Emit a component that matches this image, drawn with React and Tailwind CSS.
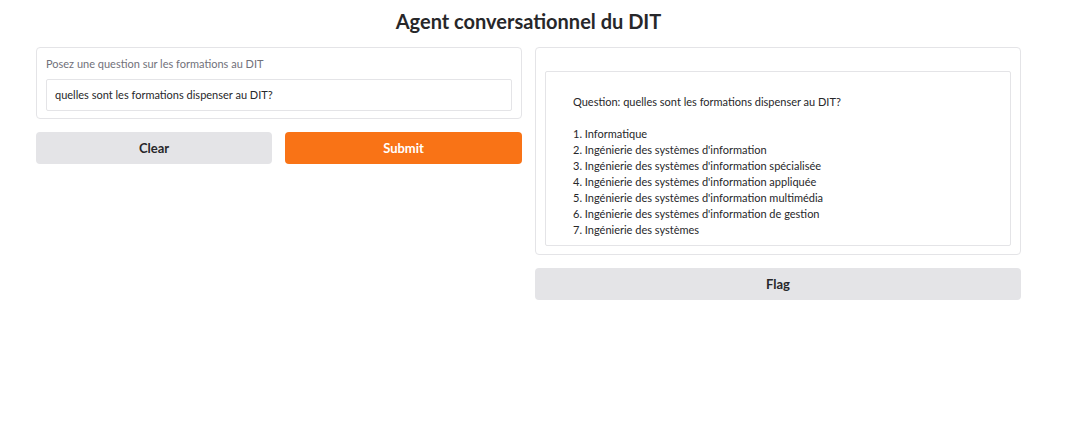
import React from 'react';

const formations = [
  'Informatique',
  "Ingénierie des systèmes d'information",
  "Ingénierie des systèmes d'information spécialisée",
  "Ingénierie des systèmes d'information appliquée",
  "Ingénierie des systèmes d'information multimédia",
  "Ingénierie des systèmes d'information de gestion",
  'Ingénierie des systèmes',
];

export default function App() {
  return (
    <div className="w-[1080px] h-[440px] bg-white text-[#27272a] font-['Lato',sans-serif]">
      <div className="w-[985px] ml-[36px]">
        <h1 className="h-[42px] pt-[7px] text-center text-[20px] font-bold text-[#27272a] leading-[28px]">
          Agent conversationnel du DIT
        </h1>

        <div className="mt-[5px] flex gap-[13px] items-start">
          {/* Input column */}
          <div className="w-[486px] flex flex-col gap-[13px]">
            <div className="h-[72px] border border-[#e4e4e7] rounded-[4px] px-[9px] pt-[9px]">
              <div className="text-[11px] leading-[14px] text-[#71717a]">
                Posez une question sur les formations au DIT
              </div>
              <div className="mt-[8px] h-[32px] border border-[#e4e4e7] rounded-[2px] px-[8px] flex items-center text-[11px] text-[#27272a]">
                quelles sont les formations dispenser au DIT?
              </div>
            </div>
            <div className="flex gap-[13px]">
              <button className="w-[236px] h-[32px] pt-[1px] rounded-[4px] bg-[#e4e4e7] text-[13px] font-bold text-[#27272a]">
                Clear
              </button>
              <button className="flex-1 h-[32px] pt-[1px] rounded-[4px] bg-[#f97316] text-[13px] font-bold text-white">
                Submit
              </button>
            </div>
          </div>

          {/* Output column */}
          <div className="w-[486px] flex flex-col gap-[13px]">
            <div className="h-[208px] border border-[#e4e4e7] rounded-[4px] px-[9px] pt-[23px]">
              <div className="h-[175px] border border-[#e4e4e7] rounded-[2px] pl-[27px] pt-[22px] text-[11px] leading-[16px] text-[#27272a]">
                <div>Question: quelles sont les formations dispenser au DIT?</div>
                <div className="mt-[16px]">
                  {formations.map((f, i) => (
                    <div key={i}>{i + 1}. {f}</div>
                  ))}
                </div>
              </div>
            </div>
            <button className="h-[32px] pt-[1px] rounded-[4px] bg-[#e4e4e7] text-[13px] font-bold text-[#27272a]">
              Flag
            </button>
          </div>
        </div>
      </div>
    </div>
  );
}
